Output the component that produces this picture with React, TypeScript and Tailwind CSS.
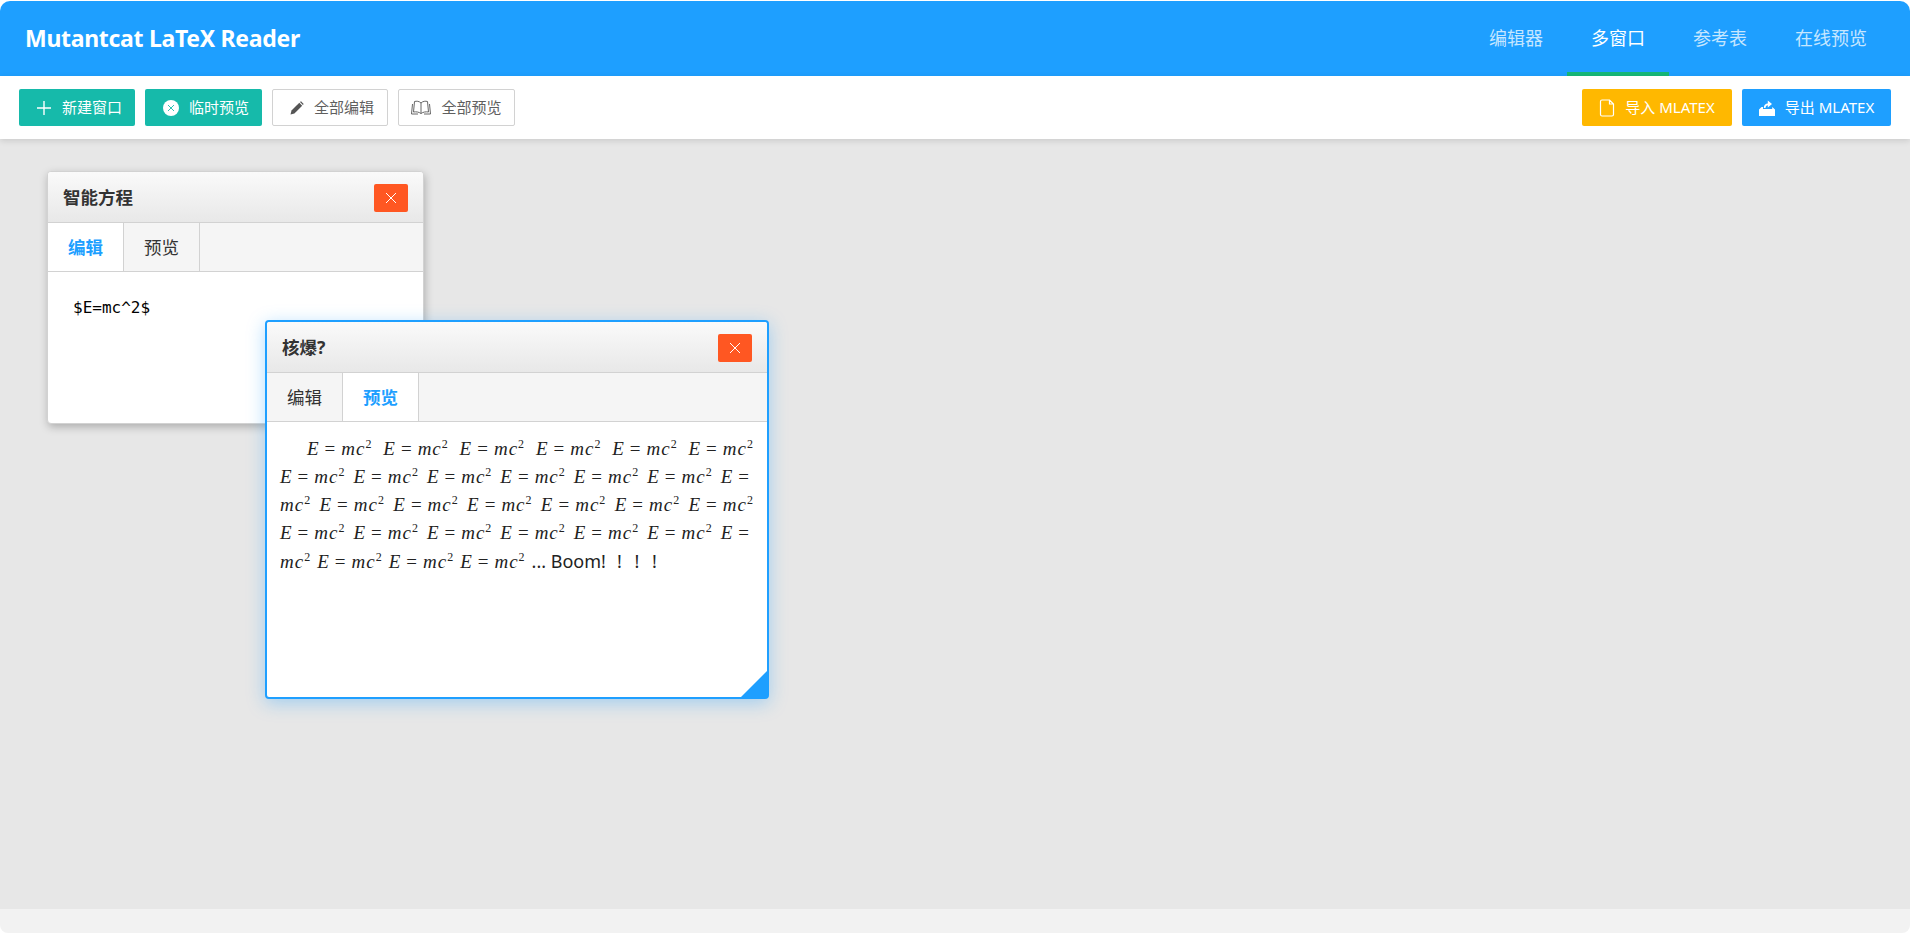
const cjk = 'font-["Noto_Sans","Noto_Sans_CJK_SC",sans-serif]';

function Sq() {
  return <sup className="text-[12px] -top-[7px] relative align-baseline">2</sup>;
}

function Eq() {
  return (
    <span className="font-['Liberation_Serif',serif] text-[19px] text-[#222] whitespace-nowrap">
      <i>E</i>
      <span className="mx-[6px]">=</span>
      <i className="tracking-[1px]">mc</i>
      <Sq />
    </span>
  );
}

function Head() {
  return (
    <span className="font-['Liberation_Serif',serif] text-[19px] text-[#222] whitespace-nowrap">
      <i>E</i>
      <span className="ml-[6px]">=</span>
    </span>
  );
}

function Tail() {
  return (
    <span className="font-['Liberation_Serif',serif] text-[19px] text-[#222] whitespace-nowrap">
      <i className="tracking-[1px]">mc</i>
      <Sq />
    </span>
  );
}

function CloseBtn() {
  return (
    <button className="w-[34px] h-[28px] mt-[2px] rounded-[2px] bg-[#ff5722] flex items-center justify-center">
      <svg width="12" height="12" viewBox="0 0 12 12" stroke="#fff" strokeWidth="1">
        <path d="M1 1 L11 11 M11 1 L1 11" />
      </svg>
    </button>
  );
}

function Win({ title, active, className, children }: { title: string; active: number; className: string; children: React.ReactNode }) {
  return (
    <div className={`absolute flex flex-col bg-white rounded-[4px] ${className}`}>
      <div className="h-[51px] shrink-0 flex items-center justify-between pl-[15px] pr-[15px] bg-gradient-to-b from-[#fafafa] to-[#e8e8e8] border-b border-[#d2d2d2] rounded-t-[3px]">
        <span className="text-[17.5px] font-bold text-[#333]">{title}</span>
        <CloseBtn />
      </div>
      <div className="h-[49px] shrink-0 flex bg-[#f5f5f5] border-b border-[#d2d2d2]">
        {["编辑", "预览"].map((t, i) => (
          <div
            key={t}
            className={`w-[76px] flex items-center justify-center border-r border-[#d2d2d2] text-[17.5px] ${
              i === active ? "bg-white text-[#1e9fff] font-bold" : "text-[#333]"
            }`}
          >
            {t}
          </div>
        ))}
      </div>
      {children}
    </div>
  );
}

function Btn({ children, icon, className }: { children: React.ReactNode; icon: React.ReactNode; className: string }) {
  return (
    <button className={`h-[37px] rounded-[2px] flex items-center justify-center gap-[10px] text-[15px] ${className}`}>
      {icon}
      <span>{children}</span>
    </button>
  );
}

const row = (n: number) => Array.from({ length: n }, (_, i) => i);

export default function App() {
  return (
    <div className={`${cjk} w-[1910px] h-[933px] bg-white flex flex-col overflow-hidden`}>
      <header className="h-[75px] mt-px shrink-0 bg-[#1e9fff] rounded-t-[10px] flex items-center justify-between pl-[25px] pr-[19px]">
        <div className="text-[23px] font-bold text-white tracking-[-0.3px]">Mutantcat LaTeX Reader</div>
        <nav className="flex h-full">
          {[
            ["编辑器", false],
            ["多窗口", true],
            ["参考表", false],
            ["在线预览", false],
          ].map(([t, on]) => (
            <div
              key={t as string}
              className={`relative flex items-center px-[24px] text-[18px] ${on ? "text-white" : "text-white/75"}`}
            >
              {t}
              {on && <div className="absolute left-0 right-0 bottom-0 h-[4px] bg-[#16b777]" />}
            </div>
          ))}
        </nav>
      </header>
      <div className="h-[63px] shrink-0 bg-white flex items-center justify-between pl-[19px] pr-[19px] shadow-[0_2px_6px_rgba(0,0,0,0.12)] relative z-10">
        <div className="flex gap-[10px]">
          <Btn
            className="w-[116px] pl-[4px] bg-[#16baaa] text-white"
            icon={
              <svg width="16" height="16" viewBox="0 0 16 16" stroke="#fff" strokeWidth="1.4">
                <path d="M8 1 V15 M1 8 H15" />
              </svg>
            }
          >
            新建窗口
          </Btn>
          <Btn
            className="w-[117px] pl-[5px] bg-[#16baaa] text-white"
            icon={
              <svg width="16" height="16" viewBox="0 0 16 16">
                <circle cx="8" cy="8" r="8" fill="#fff" />
                <path d="M5 5 L11 11 M11 5 L5 11" stroke="#16baaa" strokeWidth="0.9" />
              </svg>
            }
          >
            临时预览
          </Btn>
          <Btn
            className="w-[116px] pl-[4px] bg-white text-[#5f5f5f] border border-[#d2d2d2]"
            icon={
              <svg width="14" height="14" viewBox="0 0 14 14" fill="#555">
                <path d="M0.5 13.5 L1.5 9.6 L9.3 1.8 L12.2 4.7 L4.4 12.5 Z" />
                <path d="M10 1.1 L11 0.3 L13.7 3 L12.9 4 Z" />
              </svg>
            }
          >
            全部编辑
          </Btn>
          <Btn
            className="w-[117px] gap-[8px] bg-white text-[#5f5f5f] border border-[#d2d2d2]"
            icon={
              <svg width="20" height="16" viewBox="0 0 20 16" fill="none" stroke="#666" strokeWidth="1">
                <path d="M10 3 C8 1 5.5 1 3.5 1.5 L2.5 12 C5 11.5 8 12 10 13.5 C12 12 15 11.5 17.5 12 L16.5 1.5 C14.5 1 12 1 10 3 Z M10 3 V13.5" />
                <path d="M1.5 4 L0.5 14 H7 M18.5 4 L19.5 14 H13" />
              </svg>
            }
          >
            全部预览
          </Btn>
        </div>
        <div className="flex gap-[10px]">
          <Btn
            className="w-[150px] bg-[#ffb800] text-white"
            icon={
              <svg width="16" height="18" viewBox="0 0 16 18" fill="none" stroke="#fff" strokeWidth="1.2">
                <path d="M1.5 2.5 Q1.5 1 3 1 H10.5 L14.5 5 V15.5 Q14.5 17 13 17 H3 Q1.5 17 1.5 15.5 Z M10.5 1 V5 H14.5" />
              </svg>
            }
          >
            导入 MLATEX
          </Btn>
          <Btn
            className="w-[149px] bg-[#1e9fff] text-white"
            icon={
              <svg width="16" height="17" viewBox="0 0 16 17" fill="#fff">
                <path d="M0 10.5 L2.5 8 H4 V10 H13.2 V8 L16 10.5 V17 H0 Z" />
                <path d="M4.8 9 C4.8 6 6.5 4.6 8.8 4.5 V1.5 L13 5 L8.8 8.5 V6.3 C7.5 6.4 6.7 7.5 6.5 9 Z" />
              </svg>
            }
          >
            导出 MLATEX
          </Btn>
        </div>
      </div>
      <main className="relative flex-1 bg-[#e7e7e7]">
        <Win
          title="智能方程"
          active={0}
          className="left-[47px] top-[32px] w-[377px] h-[253px] border border-[#d2d2d2] shadow-[1px_3px_8px_rgba(0,0,0,0.25)]"
        >
          <div className="pl-[25px] pt-[24px] font-['DejaVu_Sans_Mono',monospace] text-[16px] text-black">$E=mc^2$</div>
        </Win>
        <Win
          title="核爆?"
          active={1}
          className="left-[265px] top-[181px] w-[504px] h-[379px] border-2 border-[#1e9fff] shadow-[0_4px_18px_rgba(30,159,255,0.35)]"
        >
          <div className="relative flex-1 pl-[13px] pr-[14px] pt-[13px] leading-[28px] text-[#222]">
            <div className="flex h-[28px] justify-between pl-[27px]">
              {row(6).map((i) => (
                <Eq key={i} />
              ))}
            </div>
            <div className="flex h-[28px] justify-between pr-[4px]">
              {row(6).map((i) => (
                <Eq key={i} />
              ))}
              <Head />
            </div>
            <div className="flex h-[28px] justify-between">
              <Tail />
              {row(6).map((i) => (
                <Eq key={i} />
              ))}
            </div>
            <div className="flex h-[28px] justify-between pr-[4px]">
              {row(6).map((i) => (
                <Eq key={i} />
              ))}
              <Head />
            </div>
            <div className="flex h-[28px] items-baseline gap-[7px]">
              <Tail />
              {row(3).map((i) => (
                <Eq key={i} />
              ))}
              <span className="text-[18px] text-[#222] flex">
                <span className="whitespace-pre">... Boom! </span>
                {row(3).map((i) => (
                  <span key={i} className="w-[17.5px] text-center">!</span>
                ))}
              </span>
            </div>
            <div className="absolute right-0 bottom-0 w-[26px] h-[26px] bg-[#1e9fff] [clip-path:polygon(100%_0,100%_100%,0_100%)]" />
          </div>
        </Win>
      </main>
      <footer className="h-[24px] shrink-0 bg-[#f2f2f2] rounded-b-[8px]" />
    </div>
  );
}
